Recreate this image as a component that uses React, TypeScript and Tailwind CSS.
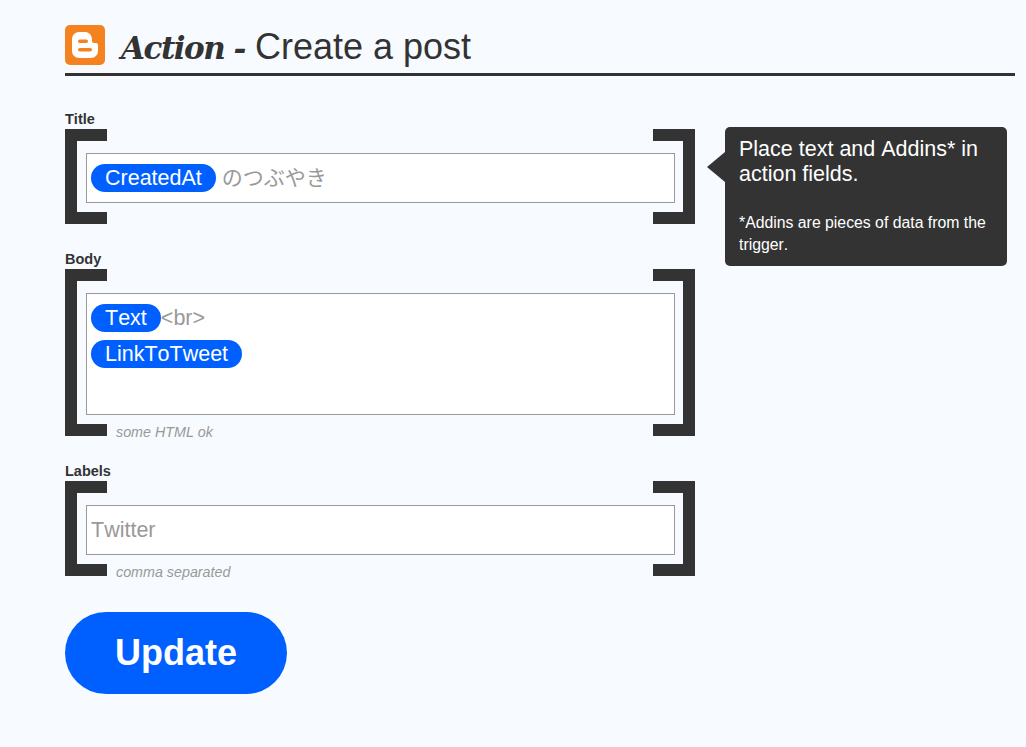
import type { ReactNode } from 'react';

const Pill = ({ children }: { children: ReactNode }) => (
    <span className="inline-flex h-[28px] items-center rounded-[14px] bg-[#0060ff] px-[14px] text-white">
        {children}
    </span>
);

type FieldProps = {
    label: string;
    hint?: string;
    inputHeight: string;
    children: ReactNode;
};

const Field = ({ label, hint, inputHeight, children }: FieldProps) => (
    <div className="flex flex-col">
        <label className="h-[22px] pt-[4px] text-[14.5px] leading-[16px] font-bold text-[#333]">{label}</label>
        <div className="grid w-[630px]">
            {/* Brackets */}
            <div className="col-start-1 row-start-1 flex">
                <div className="w-[42px] border-y-[12px] border-l-[12px] border-[#333]" />
                {hint && (
                    <span className="ml-[9px] -mb-[4px] self-end text-[14.3px] leading-[16px] text-[#999] italic">
                        {hint}
                    </span>
                )}
                <div className="ml-auto w-[42px] border-y-[12px] border-r-[12px] border-[#333]" />
            </div>
            {/* Input */}
            <div className="z-10 col-start-1 row-start-1 mt-[24px] mr-[20px] mb-[21px] ml-[21px]">
                <div
                    className={`${inputHeight} border border-[#999] bg-white px-[4px] text-[21.5px] leading-[28px] text-[#999]`}
                >
                    {children}
                </div>
            </div>
        </div>
    </div>
);

export default function App() {
    return (
        <div className="min-h-[747px] bg-[#f7fbff] pt-[25px] pr-[11px] pl-[65px] font-['Liberation_Sans',Arial,sans-serif] text-[#333] [font-kerning:none]">
            {/* Header */}
            <div className="flex h-[51px] items-start gap-[15px] border-b-[3px] border-[#333]">
                <svg width="40" height="40" viewBox="0 0 40 40" className="shrink-0">
                    <rect width="40" height="40" rx="5" fill="#f58220" />
                    <path
                        d="M14 7h6a7 7 0 0 1 7 7v2a2 2 0 0 0 2 2h2a2 2 0 0 1 2 2v6a7 7 0 0 1-7 7H14a7 7 0 0 1-7-7V14a7 7 0 0 1 7-7z"
                        fill="#fff"
                    />
                    <rect x="13" y="14.5" width="10" height="3.5" rx="1.75" fill="#f58220" />
                    <rect x="13" y="23" width="14" height="3.5" rx="1.75" fill="#f58220" />
                </svg>
                <h1 className="text-[36px] leading-[44px] whitespace-nowrap">
                    <span className="ml-px font-['DejaVu_Serif',serif] text-[31px] font-bold tracking-[-1.5px] italic">
                        Action -
                    </span>{' '}
                    Create a post
                </h1>
            </div>

            <div className="mt-[31px] flex items-start gap-[30px]">
                {/* Form */}
                <div className="flex w-[630px] flex-col">
                    <Field label="Title" inputHeight="h-[50px]">
                        <div className="flex h-full items-center gap-[6px]">
                            <Pill>CreatedAt</Pill>
                            <span className="font-['Liberation_Sans','Noto_Sans_CJK_JP',sans-serif] text-[21px]">
                                のつぶやき
                            </span>
                        </div>
                    </Field>
                    <div className="mt-[23px]">
                        <Field label="Body" hint="some HTML ok" inputHeight="h-[122px]">
                            <div className="flex flex-col gap-[8px] pt-[10px]">
                                <div className="flex items-center">
                                    <Pill>Text</Pill>
                                    <span>&lt;br&gt;</span>
                                </div>
                                <div className="flex">
                                    <Pill>LinkToTweet</Pill>
                                </div>
                            </div>
                        </Field>
                    </div>
                    <div className="mt-[23px]">
                        <Field label="Labels" hint="comma separated" inputHeight="h-[50px]">
                            <div className="flex h-full items-center">Twitter</div>
                        </Field>
                    </div>
                    <button className="mt-[36px] h-[82px] w-[222px] rounded-[41px] bg-[#0060ff] text-[36px] font-bold text-white">
                        Update
                    </button>
                </div>

                {/* Tooltip */}
                <div className="relative mt-[20px] h-[139px] w-[282px] rounded-[5px] bg-[#333] pt-[10px] pl-[14px] text-white">
                    <div className="absolute top-[25px] left-[-18px] h-0 w-0 border-y-[15px] border-r-[18px] border-y-transparent border-r-[#333]" />
                    <p className="text-[21.5px] leading-[25px]">Place text and Addins* in action fields.</p>
                    <p className="mt-[25px] text-[15.8px] leading-[22px]">*Addins are pieces of data from the trigger.</p>
                </div>
            </div>
        </div>
    );
}
